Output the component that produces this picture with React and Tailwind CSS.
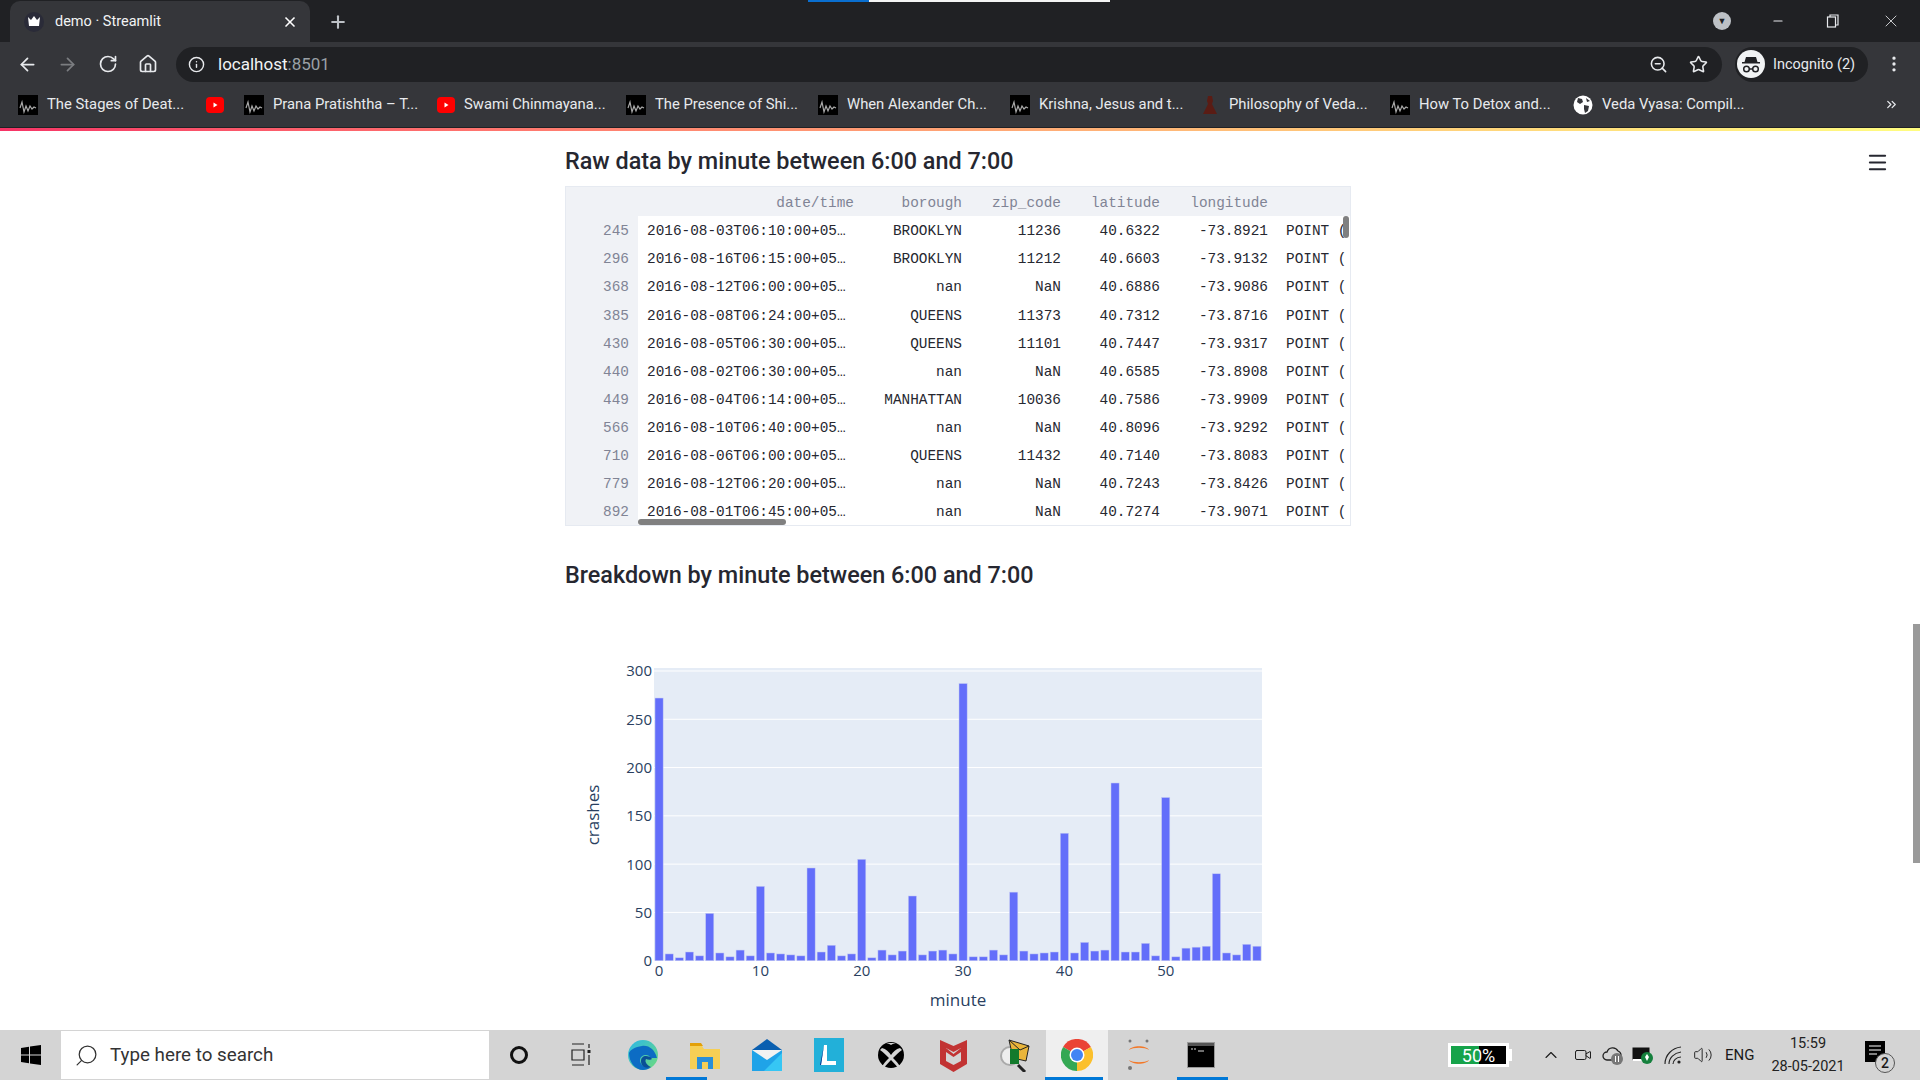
import { ArrowLeft, ArrowRight, RotateCw, House, Info, ZoomOut, Star, EllipsisVertical, X, Plus, Minus, ChevronUp, Search, Menu, ChevronsRight, Video, Volume2 } from 'lucide-react'

const rows = [
  ['245', '2016-08-03T06:10:00+05…', 'BROOKLYN', '11236', '40.6322', '-73.8921'],
  ['296', '2016-08-16T06:15:00+05…', 'BROOKLYN', '11212', '40.6603', '-73.9132'],
  ['368', '2016-08-12T06:00:00+05…', 'nan', 'NaN', '40.6886', '-73.9086'],
  ['385', '2016-08-08T06:24:00+05…', 'QUEENS', '11373', '40.7312', '-73.8716'],
  ['430', '2016-08-05T06:30:00+05…', 'QUEENS', '11101', '40.7447', '-73.9317'],
  ['440', '2016-08-02T06:30:00+05…', 'nan', 'NaN', '40.6585', '-73.8908'],
  ['449', '2016-08-04T06:14:00+05…', 'MANHATTAN', '10036', '40.7586', '-73.9909'],
  ['566', '2016-08-10T06:40:00+05…', 'nan', 'NaN', '40.8096', '-73.9292'],
  ['710', '2016-08-06T06:00:00+05…', 'QUEENS', '11432', '40.7140', '-73.8083'],
  ['779', '2016-08-12T06:20:00+05…', 'nan', 'NaN', '40.7243', '-73.8426'],
  ['892', '2016-08-01T06:45:00+05…', 'nan', 'NaN', '40.7274', '-73.9071'],
]

const crashes = [
  272, 7, 3, 9, 5, 49, 8, 4, 11, 5, 77, 8, 7, 6, 5, 96, 9, 16, 5, 7,
  105, 3, 11, 6, 10, 67, 6, 10, 11, 7, 287, 4, 4, 11, 6, 71, 10, 7, 8, 9,
  132, 8, 19, 10, 11, 184, 9, 9, 18, 5, 169, 4, 13, 14, 15, 90, 8, 6, 17, 15,
]

const WaveIcon = () => (
  <svg width="20" height="20" viewBox="0 0 20 20" className="shrink-0">
    <rect width="20" height="20" fill="#000" />
    <path d="M2 13l2-6 2 10 2-6 2 5 2-5 2 3 2-2 2 1" fill="none" stroke="#aaa" strokeWidth="1.2" />
  </svg>
)

const YtIcon = () => (
  <svg width="18" height="16" viewBox="0 0 18 16" className="shrink-0">
    <rect width="18" height="16" rx="4" fill="#f00" />
    <path d="M7.5 5.5v5l4-2.500z" fill="#fff" />
  </svg>
)

const StatueIcon = () => (
  <svg width="20" height="20" viewBox="0 0 20 20" className="shrink-0">
    <path d="M8 1h4l1 5-1 3 3 6 2 4H3l2-4 3-6-1-3z" fill="#5a1c14" />
  </svg>
)

const GlobeIcon = () => (
  <svg width="20" height="20" viewBox="0 0 20 20" className="shrink-0">
    <circle cx="10" cy="10" r="9.500" fill="#fff" />
    <path d="M5 3l4 1 1 3-3 2-3-2zM11 10l5 1-1 5-3 2-1-4zM13 3l4 3-3 1z" fill="#35363a" />
  </svg>
)

const bookmarks = [
  { icon: <WaveIcon />, text: 'The Stages of Deat...', width: 'w-[188px]' },
  { icon: <YtIcon />, text: '', width: 'w-[38px]' },
  { icon: <WaveIcon />, text: 'Prana Pratishtha – T...', width: 'w-[193px]' },
  { icon: <YtIcon />, text: 'Swami Chinmayana...', width: 'w-[189px]' },
  { icon: <WaveIcon />, text: 'The Presence of Shi...', width: 'w-[192px]' },
  { icon: <WaveIcon />, text: 'When Alexander Ch...', width: 'w-[192px]' },
  { icon: <WaveIcon />, text: 'Krishna, Jesus and t...', width: 'w-[190px]' },
  { icon: <StatueIcon />, text: 'Philosophy of Veda...', width: 'w-[190px]' },
  { icon: <WaveIcon />, text: 'How To Detox and...', width: 'w-[183px]' },
  { icon: <GlobeIcon />, text: 'Veda Vyasa: Compil...', width: 'w-[200px]' },
]

const BrowserChrome = () => (
  <div className="shrink-0 relative" style={{ fontFamily: 'Roboto, sans-serif' }}>
    {/* tab strip */}
    <div className="h-[42px] bg-[#202124] flex items-end pl-[10px] text-white">
      <div className="w-[300px] h-[41px] bg-[#35363a] rounded-t-[10px] flex items-center pl-[14px] pr-[12px]">
        <div className="w-[20px] h-[20px] rounded-full bg-[#2a2b38] flex items-center justify-center shrink-0">
          <svg width="14" height="11" viewBox="0 0 14 11"><path d="M1 1l3 3 3-4 3 4 3-3-1 9H2z" fill="#fff" /></svg>
        </div>
        <span className="ml-[11px] text-[14.500px] text-[#f1f3f4] flex-1">demo · Streamlit</span>
        <X size={16} strokeWidth={2.5} />
      </div>
      <div className="ml-[18px] h-[41px] flex items-center"><Plus size={20} strokeWidth={2.5} color="#bdc1c6" /></div>
      <div className="ml-auto h-[42px] flex items-center">
        <div className="w-[18px] h-[18px] rounded-full bg-[#bdc1c6] flex items-center justify-center text-[#202124] text-[9px] leading-none">▼</div>
        <div className="w-[46px] ml-[24px] flex justify-center"><Minus size={14} color="#e8eaed" strokeWidth={1.8} /></div>
        <div className="w-[46px] ml-[9px] flex justify-center">
          <svg width="14" height="14" viewBox="0 0 14 14" fill="none" stroke="#e8eaed" strokeWidth="1.200"><rect x="1.500" y="3" width="8" height="10" /><path d="M4 3V1h8v10h-2.500" /></svg>
        </div>
        <div className="w-[46px] ml-[12px] mr-[6px] flex justify-center"><X size={20} color="#e8eaed" strokeWidth={1} /></div>
      </div>
    </div>
    <div className="absolute top-0 left-[808px] h-[2px] w-[61px] bg-[#0a6fd0]" />
    <div className="absolute top-0 left-[869px] h-[2px] w-[241px] bg-[#f4f4f4]" />

    {/* toolbar */}
    <div className="h-[44px] bg-[#35363a] flex items-center pl-[17px] text-[#e8eaed]">
      <ArrowLeft size={21} />
      <ArrowRight size={21} color="#7b7d80" className="ml-[19px]" />
      <RotateCw size={20} className="ml-[20px]" />
      <House size={20} className="ml-[20px]" />
      <div className="ml-[18px] w-[1546px] h-[35px] rounded-full bg-[#202124] flex items-center pl-[12px] pr-[14px] shrink-0">
        <Info size={17} />
        <span className="ml-[13px] pt-[2px] text-[17px] text-[#f1f3f4]">localhost<span className="text-[#9aa0a6]">:8501</span></span>
        <ZoomOut size={19} className="ml-auto" />
        <Star size={19} className="ml-[21px]" />
      </div>
      <div className="ml-[13px] w-[133px] h-[35px] rounded-full bg-[#202124] flex items-center pl-[2px] shrink-0">
        <svg width="28" height="28" viewBox="0 0 28 28" className="shrink-0">
          <circle cx="14" cy="14" r="14" fill="#f1f3f4" />
          <path d="M9 7h10l1.500 5h2.500v1.500H5V12h2.500z" fill="#202124" />
          <circle cx="9.500" cy="19" r="2.800" fill="none" stroke="#202124" strokeWidth="1.500" />
          <circle cx="18.500" cy="19" r="2.800" fill="none" stroke="#202124" strokeWidth="1.500" />
          <path d="M12 19h4" stroke="#202124" strokeWidth="1.500" />
        </svg>
        <span className="ml-[8px] pt-[2px] text-[14.500px] text-[#e8eaed] whitespace-nowrap">Incognito (2)</span>
      </div>
      <EllipsisVertical size={20} className="ml-[16px] shrink-0" />
    </div>

    {/* bookmarks bar */}
    <div className="h-[42px] bg-[#35363a] border-b border-[#202124] flex items-center pl-[18px] pb-[4px] text-[#e8eaed]">
      {bookmarks.map((b, i) => (
        <div key={i} className={`${b.width} flex items-center shrink-0`}>
          {b.icon}
          {b.text && <span className="ml-[9px] text-[14.800px] whitespace-nowrap">{b.text}</span>}
        </div>
      ))}
      <ChevronsRight size={15} className="ml-[111px]" />
    </div>
    <div className="h-[3px] bg-gradient-to-r from-[#f63366] to-[#fffd80]" />
  </div>
)

const cell = 'shrink-0 text-right pt-[4px]'

const DataTable = () => (
  <div className="relative mt-[10px] w-[786px] h-[340px] border border-[#e6eaf1] overflow-hidden text-[14.4px] text-[#262730]" style={{ fontFamily: '"Liberation Mono", monospace' }}>
    <div className="h-[29px] bg-[#f0f2f6] flex items-center text-[#808495] whitespace-nowrap">
      <div className={`${cell} w-[288px]`}>date/time</div>
      <div className={`${cell} w-[108px]`}>borough</div>
      <div className={`${cell} w-[99px]`}>zip_code</div>
      <div className={`${cell} w-[99px]`}>latitude</div>
      <div className={`${cell} w-[108px]`}>longitude</div>
    </div>
    {rows.map((r) => (
      <div key={r[0]} className="h-[28.1px] flex items-center whitespace-nowrap">
        <div className="w-[72px] h-full bg-[#f0f2f6] text-[#808495] pt-[4px] pr-[9px] flex items-center justify-end shrink-0">{r[0]}</div>
        <div className="w-[216px] pl-[9px] pt-[4px] shrink-0">{r[1]}</div>
        <div className={`${cell} w-[108px]`}>{r[2]}</div>
        <div className={`${cell} w-[99px]`}>{r[3]}</div>
        <div className={`${cell} w-[99px]`}>{r[4]}</div>
        <div className={`${cell} w-[108px]`}>{r[5]}</div>
        <div className="ml-[18px] pt-[4px] shrink-0">POINT (</div>
      </div>
    ))}
    <div className="absolute right-[1px] top-[29px] w-[6px] h-[22px] rounded-full bg-[#808080]" />
    <div className="absolute left-[72px] bottom-0 w-[148px] h-[6px] rounded-full bg-[#808080]" />
  </div>
)

const BarChart = () => {
  const plotLeft = 89
  const plotRight = 697
  const plotTop = 48
  const y0 = 340.7
  const unit = 0.9657
  const step = (plotRight - plotLeft) / 60
  const font = '"Open Sans", sans-serif'
  return (
    <svg width="786" height="410" className="block" style={{ fontFamily: font }}>
      <rect x={plotLeft} y={plotTop} width={plotRight - plotLeft} height={y0 - plotTop} fill="#e5ecf6" />
      {[50, 100, 150, 200, 250, 300].map((v) => (
        <line key={v} x1={plotLeft} x2={plotRight} y1={y0 - v * unit} y2={y0 - v * unit} stroke="#fff" strokeWidth="1" />
      ))}
      {crashes.map((v, i) => (
        <rect key={i} x={plotLeft + i * step + 1} y={y0 - v * unit} width={step - 2} height={v * unit} fill="#636efa" stroke="#c3c9f4" strokeWidth="0.5" />
      ))}
      {[0, 50, 100, 150, 200, 250, 300].map((v) => (
        <text key={v} x="87" y={y0 - v * unit + 5.500} textAnchor="end" fontSize="15" fill="#2a3f5f">{v}</text>
      ))}
      {[0, 10, 20, 30, 40, 50].map((v) => (
        <text key={v} x={plotLeft + v * step + step / 2} y="356" textAnchor="middle" fontSize="15" fill="#2a3f5f">{v}</text>
      ))}
      <text x="393" y="386" textAnchor="middle" fontSize="17" fill="#2a3f5f">minute</text>
      <text x="0" y="0" textAnchor="middle" fontSize="17" fill="#2a3f5f" transform="translate(34 195) rotate(-90)">crashes</text>
    </svg>
  )
}

const TrayIcon = ({ children, className }) => <div className={`flex items-center justify-center shrink-0 ${className}`}>{children}</div>

const TaskSlot = ({ children, active, underline }) => (
  <div className={`relative w-[62px] h-full flex items-center justify-center shrink-0 ${active ? 'bg-[#efefef]' : ''}`}>
    {children}
    {underline && <div className={`absolute bottom-0 h-[3px] bg-[#0078d7] ${underline}`} />}
  </div>
)

const Taskbar = () => (
  <div className="h-[50px] shrink-0 bg-[#d4d4d4] flex items-center text-[#1a1a1a]" style={{ fontFamily: 'Roboto, sans-serif' }}>
    <div className="w-[61px] flex justify-center">
      <svg width="20" height="20" viewBox="0 0 20 20" fill="#000"><path d="M0 3l8-1.200V9.500H0zM9 1.600L20 0v9.500H9zM0 10.500h8v7.700L0 17zM9 10.500h11V20L9 18.400z" /></svg>
    </div>
    <div className="w-[428px] h-[48px] bg-white flex items-center pl-[13px] text-[18.800px] text-[#333]">
      <Search size={25} strokeWidth={1.2} className="scale-x-[-1]" />
      <span className="ml-[11px]">Type here to search</span>
    </div>
    <div className="flex h-full ml-[-1px]">
      <TaskSlot><div className="w-[18px] h-[18px] rounded-full border-[3px] border-[#111]" /></TaskSlot>
      <TaskSlot>
        <svg width="20" height="24" viewBox="0 0 20 24" fill="none" stroke="#222" strokeWidth="1.200"><path d="M1 1h12M1 22h12M1 7h12v10H1z" /><path d="M18 1v4M18 12v10" /><rect x="16.500" y="7" width="3" height="3" fill="#222" stroke="none" /></svg>
      </TaskSlot>
      <TaskSlot>
        <svg width="30" height="30" viewBox="0 0 30 30">
          <defs>
            <linearGradient id="edgeTop" x1="0" y1="0" x2="1" y2="1"><stop offset="0" stopColor="#2bb7e8" /><stop offset="1" stopColor="#6fdc7c" /></linearGradient>
          </defs>
          <circle cx="15" cy="15" r="15" fill="url(#edgeTop)" />
          <path d="M1 13c0 9 6 17 14 17 3 0 6-1 8-3-6 1-11-2-11-7 0-3 3-5 6-5 2 0 4 1 4 3h7C27 10 21 5 14 6 7 7 2 10 1 13z" fill="#0c6cc4" />
          <path d="M13 21c0-3 2-5 5-5 2 0 5 1 6 3-1 1-4 1-6 0-2 3 2 7 5 8-6 2-10-1-10-6z" fill="#0a4f96" />
        </svg>
      </TaskSlot>
      <TaskSlot underline="left-[-8px] w-[41px]">
        <svg width="30" height="27" viewBox="0 0 30 27"><path d="M0 4h12l2 3h16v20H0z" fill="#f6cf55" /><path d="M0 1h11l2 3H0z" fill="#e3a008" /><path d="M7 15h16v12h-5v-7h-6v7H7z" fill="#2a8fd8" /></svg>
      </TaskSlot>
      <TaskSlot>
        <svg width="30" height="32" viewBox="0 0 30 32"><path d="M15 0L30 11H0z" fill="#0a5fb0" /><rect y="11" width="30" height="21" fill="#1fa3e8" /><path d="M0 11h30L15 21z" fill="#f2f2f2" /><path d="M30 14v18H12z" fill="#36c6f4" /></svg>
      </TaskSlot>
      <TaskSlot>
        <svg width="30" height="34" viewBox="0 0 30 34"><rect width="30" height="34" fill="#22b0d9" /><path d="M10 7h3v16h9v4H7z" fill="#fff" /><path d="M10 7L6 27h1z" fill="#0a2a8f" /></svg>
      </TaskSlot>
      <TaskSlot>
        <svg width="26" height="26" viewBox="0 0 26 26"><circle cx="13" cy="13" r="13" fill="#000" /><path d="M4 6c4 1 7 4 9 7 2-3 5-6 9-7l2 2c-3 2-7 6-9 8 3 3 6 6 7 9l-2 1c-2-3-5-6-7-8-2 2-5 5-7 8l-2-1c1-3 4-6 7-9-2-2-6-6-9-8zM8 1c3 1 4 1 5 2 1-1 2-1 5-2z" fill="#d4d4d4" /></svg>
      </TaskSlot>
      <TaskSlot>
        <svg width="27" height="34" viewBox="0 0 27 34"><path d="M0 2l13.500 6L27 2v24l-13.500 8L0 26z" fill="#c23333" /><path d="M6 10l7.500 4L21 10v13l-7.500 4L6 23z" fill="#d4d4d4" /><path d="M6 10l7.500 6L21 10v4l-7.500 5L6 14z" fill="#c23333" /></svg>
      </TaskSlot>
      <TaskSlot>
        <svg width="30" height="34" viewBox="0 0 30 34"><circle cx="10" cy="18" r="9" fill="#eee" stroke="#aaa" strokeWidth="2" /><path d="M9 2l20 6-3 15-13-3z" fill="#e9b53a" stroke="#222" /><path d="M9 2l11 10 9-4" fill="none" stroke="#222" /><rect x="10" y="11" width="9" height="15" fill="#137a2c" /><path d="M18 27l7 7" stroke="#222" strokeWidth="3" /></svg>
      </TaskSlot>
      <TaskSlot active underline="left-[-1px] w-[58px]">
        <svg width="32" height="32" viewBox="-16 -16 32 32">
          <path d="M0 0L-13.900-8A16 16 0 0 1 13.900-8Z" fill="#ea4335" />
          <path d="M0 0L13.900-8A16 16 0 0 1 0 16Z" fill="#fbc02d" />
          <path d="M0 0L0 16A16 16 0 0 1-13.900-8Z" fill="#34a853" />
          <circle r="7.500" fill="#fff" />
          <circle r="6" fill="#4285f4" />
        </svg>
      </TaskSlot>
      <TaskSlot>
        <svg width="24" height="32" viewBox="0 0 24 32">
          <path d="M2 11c3-5 17-5 20 0-4-3-16-3-20 0zM2 21c3 5 17 5 20 0-4 3-16 3-20 0z" fill="#f37726" />
          <circle cx="3" cy="2" r="1.500" fill="#767677" />
          <circle cx="20" cy="2" r="1.500" fill="#767677" />
          <circle cx="3" cy="29" r="2" fill="#767677" />
        </svg>
      </TaskSlot>
      <TaskSlot underline="left-[7px] w-[51px]">
        <svg width="28" height="26" viewBox="0 0 28 26"><rect width="28" height="26" fill="#999" /><rect x="1" y="1" width="26" height="24" fill="#000" /><rect x="1" y="1" width="26" height="3" fill="#555" /><path d="M4 7h2M7 7h2M11 9h6" stroke="#ddd" strokeWidth="1" /></svg>
      </TaskSlot>
    </div>

    <div className="ml-[216px] flex items-center h-full">
      <div className="w-[61px] h-[24px] border-[3px] border-white bg-black relative flex items-center justify-center">
        <div className="absolute left-0 top-0 bottom-0 w-[28px] bg-[#16a34a]" />
        <span className="relative text-white text-[18px]">50%</span>
      </div>
      <div className="w-[3px] h-[12px] bg-white" />
      <TrayIcon className="ml-[29px] w-[20px]"><ChevronUp size={24} strokeWidth={1.300} /></TrayIcon>
      <TrayIcon className="ml-[12px] w-[20px]"><Video size={18} strokeWidth={1.300} /></TrayIcon>
      <TrayIcon className="ml-[9px] w-[22px]">
        <svg width="22" height="20" viewBox="0 0 22 20"><path d="M5 15a4 4 0 0 1 0-8 6 6 0 0 1 11-1 4.500 4.500 0 0 1 3 4v5z" fill="#d4d4d4" stroke="#222" strokeWidth="1.300" /><circle cx="15" cy="14" r="6" fill="#777" /><path d="M13.500 11v6M16.500 11v6" stroke="#fff" /></svg>
      </TrayIcon>
      <TrayIcon className="ml-[8px] w-[22px]">
        <svg width="22" height="18" viewBox="0 0 22 18"><rect x="1" y="2" width="16" height="11" fill="#111" stroke="#111" /><rect x="1" y="13" width="13" height="2" fill="#fff" /><circle cx="15" cy="12" r="6" fill="#15803d" /><path d="M15 8l2 3-2 4-2-4z" fill="#fff" /></svg>
      </TrayIcon>
      <TrayIcon className="ml-[8px] w-[22px]">
        <svg width="20" height="20" viewBox="0 0 20 20" fill="none" stroke="#222" strokeWidth="1.100"><path d="M2 19C2 10 9 3 18 2M6 19c0-6 5-11 12-12M10 19c0-3 3-7 8-7" /><circle cx="16" cy="17" r="1.600" fill="#222" stroke="none" /></svg>
      </TrayIcon>
      <TrayIcon className="ml-[8px] w-[22px]"><Volume2 size={20} strokeWidth={1.100} /></TrayIcon>
      <span className="ml-[11px] text-[15px] w-[32px]">ENG</span>
      <div className="ml-[6px] w-[90px] text-center text-[14.500px] leading-[23px] text-[#222] whitespace-nowrap">
        <div>15:59</div>
        <div>28-05-2021</div>
      </div>
      <div className="relative ml-[12px] w-[30px] h-[30px]">
        <svg width="20" height="21" viewBox="0 0 20 21" className="mt-[1px]"><rect width="20" height="21" fill="#000" /><path d="M4 5h12M4 9h12M4 13h8" stroke="#fff" /></svg>
        <div className="absolute right-[0px] bottom-[-3px] w-[20px] h-[20px] rounded-full border border-[#555] bg-[#d4d4d4] text-[14px] font-medium flex items-center justify-center">2</div>
      </div>
    </div>
  </div>
)

const App = () => {
  const headingFont = { fontFamily: 'Roboto, sans-serif' }
  return (
    <div className="w-[1920px] h-[1080px] flex flex-col overflow-hidden bg-white">
      <BrowserChrome />
      <main className="relative flex-1 overflow-hidden">
        <div className="ml-[565px] w-[786px] pt-[15px]">
          <h2 className="h-[30px] text-[23.400px] leading-[30px] font-medium text-[#262730] whitespace-nowrap" style={headingFont}>Raw data by minute between 6:00 and 7:00</h2>
          <DataTable />
          <h2 className="mt-[34px] h-[30px] text-[23.400px] leading-[30px] font-medium text-[#262730] whitespace-nowrap" style={headingFont}>Breakdown by minute between 6:00 and 7:00</h2>
          <div className="mt-[30px]"><BarChart /></div>
        </div>
        <button className="absolute right-[31px] top-[20px] text-[#262730]"><Menu size={23} strokeWidth={2} /></button>
        <div className="absolute right-0 top-[493px] w-[7px] h-[239px] bg-[#9a9a9a]" />
      </main>
      <Taskbar />
    </div>
  )
}

export default App
